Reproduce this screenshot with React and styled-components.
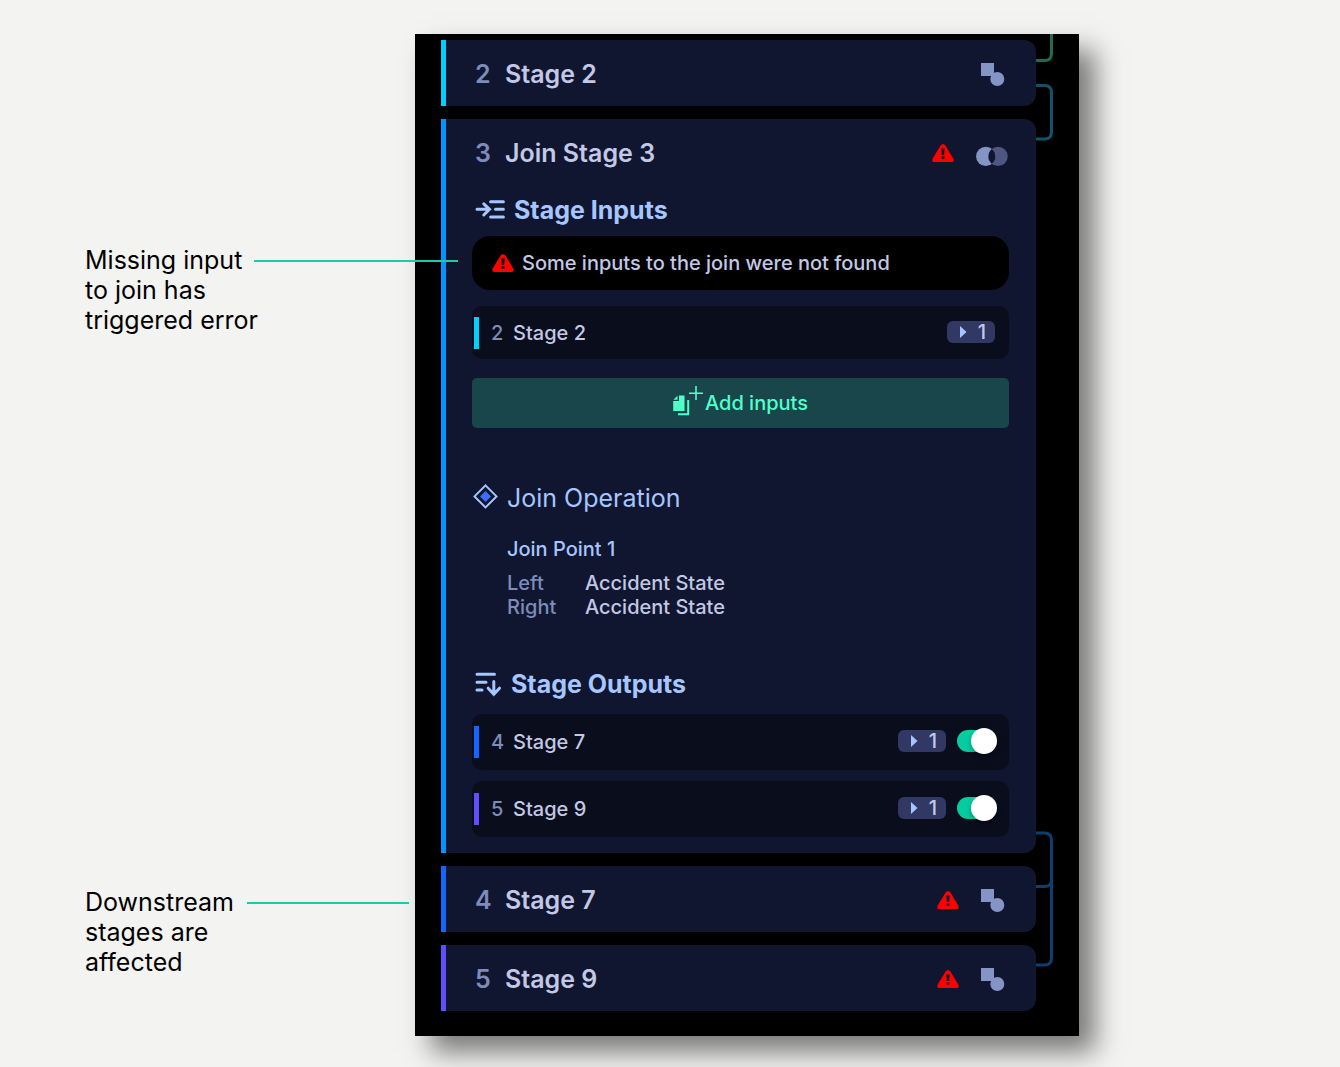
import React from "react";
import styled, { createGlobalStyle } from "styled-components";

const GlobalStyle = createGlobalStyle`
  *, *::before, *::after { box-sizing: border-box; }
  body {
    margin: 0;
    background: #f3f3f1;
    font-family: Inter, "Liberation Sans", sans-serif;
  }
  h2, h3, h4, p, dl, dd, dt, ul { margin: 0; padding: 0; font-weight: inherit; }
  ul { list-style: none; }
  svg { display: block; flex: none; overflow: visible; }
`;

const Page = styled.main`
  display: grid;
  grid-template-columns: 330px minmax(0, 1fr);
  align-items: start;
  padding: 34px 261px 31px 85px;
`;

const Notes = styled.aside`
  position: relative;
  z-index: 1;
  display: flex;
  flex-direction: column;
  gap: 552px;
  padding-top: 211px;
`;

const Note = styled.p`
  font-size: 25px;
  line-height: 30px;
  color: #000;
`;

const NoteLine = styled.span`
  display: flex;
  align-items: center;
  gap: ${({ $gap }) => $gap || 0}px;
  white-space: nowrap;
`;

const Pointer = styled.span`
  flex: 1;
  height: 2px;
  margin-top: 2px;
  margin-right: ${({ $reach }) => -$reach}px;
  background: #14cfa5;
`;

const Panel = styled.section`
  position: relative;
  display: flex;
  flex-direction: column;
  gap: 13px;
  padding: 6px 43px 25px 26px;
  background: #000;
  box-shadow: 16px 16px 25px rgba(0, 0, 0, 0.5);
`;

const Wires = styled.svg`
  position: absolute;
  top: 0;
  right: 25px;
`;

const Card = styled.article`
  border-left: 5px solid ${({ $accent }) => $accent};
  border-radius: 0 12px 12px 0;
  background: #111630;
`;

const CardHeader = styled.header`
  display: flex;
  align-items: center;
  height: 66px;
  padding: 2px 28px 0 29px;
`;

const CardNumber = styled.span`
  width: 30px;
  font-size: 25px;
  font-weight: 600;
  color: #7d8cba;
`;

const CardTitle = styled.h2`
  flex: 1;
  font-size: 25px;
  font-weight: 600;
  color: #c3c8e6;
`;

const HeaderIcons = styled.div`
  display: flex;
  align-items: center;
  gap: 22px;
`;

const CardBody = styled.div`
  padding: 0 27px 16px 26px;
`;

const SectionTitle = styled.h3`
  display: flex;
  align-items: center;
  gap: 9px;
  height: 51px;
  padding: 0 0 2px 3px;
  font-size: 25px;
  font-weight: ${({ $light }) => ($light ? 400 : 700)};
  color: #a6c6ff;
`;

const Alert = styled.div`
  display: flex;
  align-items: center;
  gap: 8px;
  height: 54px;
  margin-bottom: 16px;
  padding: 0 20px;
  border-radius: 18px;
  background: #000;
  font-size: 20px;
  font-weight: 500;
  color: #c3c8e6;
`;

const StageList = styled.ul`
  display: flex;
  flex-direction: column;
  gap: 11px;
`;

const Row = styled.li`
  display: flex;
  align-items: center;
  height: ${({ $tall }) => ($tall ? 56 : 53)}px;
  padding: 0 ${({ $tall }) => ($tall ? 12 : 14)}px 0 2px;
  border-radius: 10px;
  background: #0a0d1c;
  font-size: 20px;
  font-weight: 500;
`;

const RowAccent = styled.span`
  width: 5px;
  height: 32px;
  margin-right: 12px;
  background: ${({ $accent }) => $accent};
`;

const RowNumber = styled.span`
  width: 22px;
  color: #7d8cba;
`;

const RowName = styled.span`
  flex: 1;
  color: #c3c8e6;
`;

const RowControls = styled.span`
  display: flex;
  align-items: center;
  gap: 11px;
  padding-bottom: 2px;
`;

const Count = styled.span`
  display: flex;
  align-items: center;
  justify-content: space-between;
  width: 48px;
  height: 22px;
  padding: 0 9px 0 13px;
  border-radius: 6px;
  background: #323864;
  line-height: 22px;
  color: #c3c8e6;
`;

const Toggle = styled.input`
  appearance: none;
  display: grid;
  grid-template: 26px / 40px;
  align-items: center;
  width: 40px;
  height: 26px;
  margin: 0;
  cursor: pointer;

  &::before,
  &::after {
    content: "";
    grid-area: 1 / 1;
  }
  &::before {
    width: 34px;
    height: 22px;
    border-radius: 11px;
    background: #4a5178;
  }
  &:checked::before {
    background: #06cca0;
  }
  &::after {
    width: 26px;
    height: 26px;
    border-radius: 50%;
    background: #fff;
    box-shadow: 0 3px 5px rgba(0, 0, 0, 0.3);
  }
  &:checked::after {
    justify-self: end;
  }
`;

const AddButton = styled.button`
  display: flex;
  align-items: center;
  justify-content: center;
  gap: 2px;
  width: 100%;
  height: 50px;
  margin: 19px 0 45px;
  padding: 0;
  border: 0;
  border-radius: 5px;
  background: #19464b;
  font: inherit;
  font-size: 20px;
  font-weight: 500;
  color: #50ffcb;
  cursor: pointer;
`;

const JoinDetails = styled.div`
  padding: 13px 0 40px 35px;
  font-size: 20px;
  font-weight: 500;
  line-height: 24px;
`;

const JoinPoint = styled.h4`
  margin-bottom: 10px;
  color: #a6c6ff;
`;

const JoinSides = styled.dl`
  display: grid;
  grid-template-columns: 78px 1fr;
`;

const SideName = styled.dt`
  color: #7d8cba;
`;

const SideField = styled.dd`
  color: #c3c8e6;
`;

const OutputSection = styled.section`
  display: flex;
  flex-direction: column;
  gap: 4px;
`;

const WarningIcon = ({ hole = "#111630" }) => (
  <svg width="22" height="18" viewBox="0 0 22 18" role="img" aria-label="Error">
    <path d="M8.6 1.4Q11 -1.6 13.4 1.4L21.3 14.4Q22.6 18 19.5 18H2.5Q-.6 18 .7 14.4Z" fill="#f00" />
    <path d="M9.3 4.4h3.4l-.6 6.6H9.9z" fill={hole} />
    <path d="M9.6 12.3h2.8v2.5H9.6z" fill={hole} />
  </svg>
);

const ShapesIcon = () => (
  <svg width="27" height="26" viewBox="0 0 27 26" fill="#8494c4" aria-hidden="true">
    <path d="M0 2h13v13H0z" />
    <circle cx="16.3" cy="18" r="7" />
  </svg>
);

const VennIcon = () => (
  <svg width="32" height="26" viewBox="0 0 32 26" aria-hidden="true">
    <circle cx="22" cy="16.4" r="9.7" fill="#4d577f" />
    <circle cx="9.8" cy="16.4" r="9.7" fill="#8494c4" />
    <path d="M15.9 8.9a9.7 9.7 0 0 1 0 15a9.7 9.7 0 0 1 0-15z" fill="#111630" />
  </svg>
);

const InputsIcon = () => (
  <svg width="30" height="20" viewBox="0 0 30 20" fill="none" stroke="#a6c6ff" strokeWidth="3" strokeLinecap="round" aria-hidden="true">
    <path d="M2 9.3h12.5M8.8 3.8l5.7 5.5-5.7 5.7M15.6 1.8h12.8M20.5 9.3h7.9M15.6 17h12.8" />
  </svg>
);

const OutputsIcon = () => (
  <svg width="27" height="24" viewBox="0 0 27 24" fill="none" stroke="#a6c6ff" strokeWidth="3" strokeLinecap="round" aria-hidden="true">
    <path d="M2 2.2h17.5M2 10.2h9M2 18h5M18.8 9.5v12.8M13.2 16.2l5.6 6 5.7-6" />
  </svg>
);

const DiamondIcon = () => (
  <svg width="23" height="28" viewBox="0 0 23 28" aria-hidden="true">
    <path d="M10.5 1.4l11 11-11 11-11-11z" fill="none" stroke="#a6c6ff" strokeWidth="2" />
    <path d="M10.5 6.9l5.5 5.5-5.5 5.5L5 12.4z" fill="#3b6dff" />
  </svg>
);

const AddFilesIcon = () => (
  <svg width="30" height="34" viewBox="0 0 30 34" fill="none" aria-hidden="true">
    <path d="M6 9.5h5.5V25H.2V15H6z" fill="#50ffcb" />
    <path d="M4.5 9.8v3.9H.4z" fill="#50ffcb" />
    <path d="M15.2 14v14.2H5" stroke="#50ffcb" strokeWidth="2" />
    <path d="M23 0v14M16 7.2h14" stroke="#50ffcb" strokeWidth="1.6" />
  </svg>
);

const StageCount = ({ children }) => (
  <Count>
    <svg width="7" height="12" viewBox="0 0 7 12" fill="#a6c6ff" aria-hidden="true">
      <path d="M0 0l6.5 6L0 12z" />
    </svg>
    {children}
  </Count>
);

const StageHeader = ({ number, title, icon, error }) => (
  <CardHeader>
    <CardNumber>{number}</CardNumber>
    <CardTitle>{title}</CardTitle>
    <HeaderIcons>
      {error && <WarningIcon />}
      {icon}
    </HeaderIcons>
  </CardHeader>
);

const StageRow = ({ number, name, accent, output }) => (
  <Row $tall={output}>
    <RowAccent $accent={accent} />
    <RowNumber>{number}</RowNumber>
    <RowName>{name}</RowName>
    <RowControls>
      <StageCount>1</StageCount>
      {output && <Toggle type="checkbox" role="switch" defaultChecked aria-label={name} />}
    </RowControls>
  </Row>
);

const colors = { 2: "#00cfff", 3: "#0094ff", 4: "#1566ff", 5: "#5f4fff" };

export default function App() {
  return (
    <>
      <GlobalStyle />
      <Page>
        <Notes>
          <Note>
            <NoteLine $gap={12}>
              Missing input
              <Pointer $reach={43} />
            </NoteLine>
            <NoteLine>to join has</NoteLine>
            <NoteLine>triggered error</NoteLine>
          </Note>
          <Note>
            <NoteLine $gap={13}>
              Downstream
              <Pointer $reach={-6} />
            </NoteLine>
            <NoteLine>stages are</NoteLine>
            <NoteLine>affected</NoteLine>
          </Note>
        </Notes>

        <Panel>
          <Wires width="18" height="936" viewBox="0 0 18 936" fill="none" strokeWidth="3" aria-hidden="true">
            <path d="M0 26.5h8.5q7 0 7-7V0" stroke="#226a56" />
            <path d="M0 51.5h8.5q7 0 7 7v39.5q0 7-7 7H0" stroke="#115468" />
            <path d="M0 799h8.5q7 0 7 7v118q0 7-7 7H0M0 852.5h8.5q7 0 7-7" stroke="#0a3f6e" />
          </Wires>

          <Card $accent={colors[2]}>
            <StageHeader number={2} title="Stage 2" icon={<ShapesIcon />} />
          </Card>

          <Card $accent={colors[3]}>
            <StageHeader number={3} title="Join Stage 3" icon={<VennIcon />} error />
            <CardBody>
              <SectionTitle>
                <InputsIcon />
                Stage Inputs
              </SectionTitle>
              <Alert role="alert">
                <WarningIcon hole="#000" />
                Some inputs to the join were not found
              </Alert>
              <StageList>
                <StageRow number={2} name="Stage 2" accent={colors[2]} />
              </StageList>
              <AddButton type="button">
                <AddFilesIcon />
                Add inputs
              </AddButton>

              <SectionTitle $light>
                <DiamondIcon />
                Join Operation
              </SectionTitle>
              <JoinDetails>
                <JoinPoint>Join Point 1</JoinPoint>
                <JoinSides>
                  <SideName>Left</SideName>
                  <SideField>Accident State</SideField>
                  <SideName>Right</SideName>
                  <SideField>Accident State</SideField>
                </JoinSides>
              </JoinDetails>

              <OutputSection>
                <SectionTitle>
                  <OutputsIcon />
                  Stage Outputs
                </SectionTitle>
                <StageList>
                  <StageRow number={4} name="Stage 7" accent={colors[4]} output />
                  <StageRow number={5} name="Stage 9" accent={colors[5]} output />
                </StageList>
              </OutputSection>
            </CardBody>
          </Card>

          <Card $accent={colors[4]}>
            <StageHeader number={4} title="Stage 7" icon={<ShapesIcon />} error />
          </Card>

          <Card $accent={colors[5]}>
            <StageHeader number={5} title="Stage 9" icon={<ShapesIcon />} error />
          </Card>
        </Panel>
      </Page>
    </>
  );
}
